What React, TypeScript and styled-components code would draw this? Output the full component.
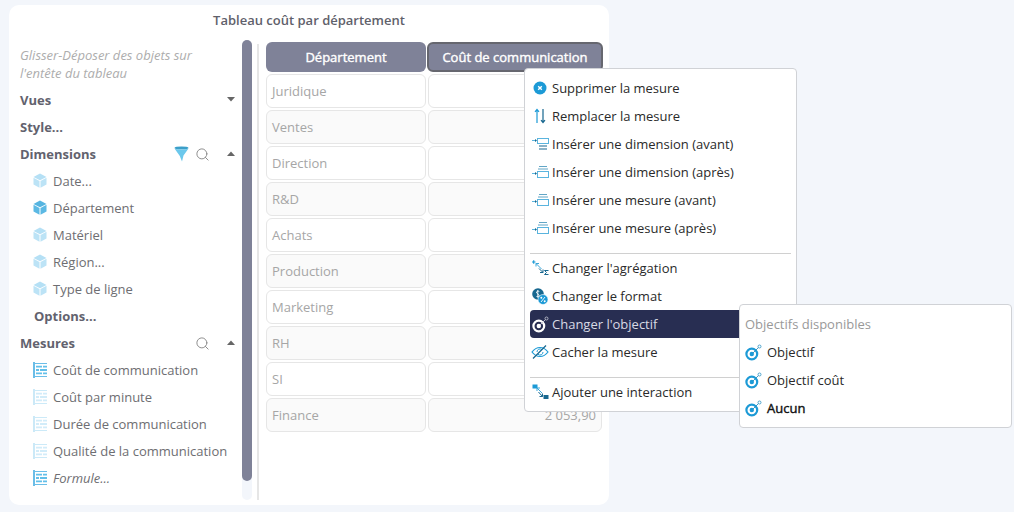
import styled, { createGlobalStyle } from "styled-components";
import { Search } from "lucide-react";

const GlobalStyle = createGlobalStyle`
  html, body {
    margin: 0;
    padding: 0;
    background: #f3f6fb;
    font-family: "Open Sans", "Liberation Sans", sans-serif;
  }
`;

const dimensions = [
  { label: "Date...", active: false },
  { label: "Département", active: true },
  { label: "Matériel", active: false },
  { label: "Région...", active: false },
  { label: "Type de ligne", active: false },
];

const measures = [
  { label: "Coût de communication", active: true },
  { label: "Coût par minute", active: false },
  { label: "Durée de communication", active: false },
  { label: "Qualité de la communication", active: false },
  { label: "Formule...", active: true, italic: true },
];

const rows = [
  "Juridique",
  "Ventes",
  "Direction",
  "R&D",
  "Achats",
  "Production",
  "Marketing",
  "RH",
  "SI",
  "Finance",
];

function CubeIcon({ active }: { active: boolean }) {
  const top = active ? "#55b4e0" : "#b5e0f5";
  const side = active ? "#5cb9e4" : "#bce3f6";
  return (
    <svg width="14" height="15" viewBox="0 0 14 15">
      <path d="M7 0.500 13.500 4 7 7.200 0.500 4Z" fill={top} />
      <path d="M0.500 4.800 6.500 8v6.700L0.500 11.400Z" fill={side} />
      <path d="M13.500 4.800 7.500 8v6.700l6-3.300Z" fill={side} />
    </svg>
  );
}

function MeasureIcon({ active }: { active: boolean }) {
  const line = active ? "#45ade2" : "#bfe4f6";
  const dash = active ? "#62bfe9" : "#d2ecf9";
  return (
    <svg width="15" height="16" viewBox="0 0 15 16" fill="none">
      <path d="M1 0v16" stroke={line} strokeWidth="1.600" />
      <path d="M2 1.500h12M2 14.500h12" stroke={line} strokeWidth="0.800" />
      <path d="M3 4.700h11M3 11.300h11" stroke={dash} strokeWidth="1.800" strokeDasharray="6 1 4" />
      <path d="M3 8h11" stroke={dash} strokeWidth="1.800" strokeDasharray="3 1 7" />
    </svg>
  );
}

function FunnelIcon() {
  return (
    <svg width="15" height="16" viewBox="0 0 15 16">
      <ellipse cx="7.500" cy="2" rx="7" ry="1.600" fill="#3b9fc9" />
      <path d="M0.500 2.600c2 1.400 12 1.400 14 0L9.500 9.500 8 15.500 5.800 10Z" fill="#6cc8ec" />
    </svg>
  );
}

function Caret({ up }: { up?: boolean }) {
  return (
    <svg width="8" height="5" viewBox="0 0 8 5">
      <path d={up ? "M0 5 4 0.500 8 5Z" : "M0 0 8 0 4 4.500Z"} fill="#666" />
    </svg>
  );
}

function CloseIcon() {
  return (
    <svg width="14" height="14" viewBox="0 0 14 14">
      <circle cx="7" cy="7" r="6.500" fill="#1c9ad6" />
      <path d="M5.200 5.200l3.600 3.600M8.800 5.200l-3.600 3.600" stroke="#fff" strokeWidth="1.400" />
    </svg>
  );
}

function SwapIcon() {
  return (
    <svg width="12" height="16" viewBox="0 0 12 16" fill="none" strokeWidth="1.200">
      <path d="M3 15V1.500M1 3.800 3 1.500 5 3.800" stroke="#1c9ad6" />
      <path d="M9 1v13.500M7 12.200 9 14.500 11 12.200" stroke="#17678f" />
    </svg>
  );
}

function InsertIcon({ before }: { before?: boolean }) {
  return (
    <svg width="17" height="12" viewBox="0 0 17 12" fill="none">
      <path d={before ? "M0 2.500h3" : "M0 7.500h3"} stroke="#5ab4de" />
      <path d={before ? "M3 1v3l2-1.500Z" : "M3 6v3l2-1.500Z"} fill="#17678f" />
      {before ? (
        <>
          <rect x="5.500" y="0.500" width="11" height="5" stroke="#5ab4de" />
          <path d="M7 8h8M7 11h8" stroke="#17678f" strokeWidth="1.100" />
        </>
      ) : (
        <>
          <path d="M7 0.500h8M6 3h10" stroke="#3a8fb8" strokeWidth="0.800" />
          <rect x="5.500" y="5.500" width="11" height="6" stroke="#5ab4de" />
        </>
      )}
    </svg>
  );
}

function AggregationIcon() {
  return (
    <svg width="17" height="16" viewBox="0 0 17 16" fill="none">
      <path d="M0 2h3.500M1.700 0.300v3.500" stroke="#1c9ad6" strokeWidth="1.200" />
      <path d="M4 3.500 9.500 9M4 6.500v-3h3" stroke="#3ba7da" />
      <path d="M7 8.500 11 12.500M8 12.500h3v-3" stroke="#17678f" />
      <path d="M16.500 10.500h-4l2 2-2 2h4" stroke="#17678f" />
    </svg>
  );
}

function FormatIcon() {
  return (
    <svg width="16" height="17" viewBox="0 0 16 17">
      <circle cx="6" cy="6" r="5.800" fill="#17678f" />
      <circle cx="11" cy="11.500" r="5" fill="#1c9ad6" stroke="#fff" strokeWidth="0.600" />
      <path d="M4.500 8.500c2 .8 3-.2 2.500-1.500S4 5.500 4.500 4c.5-1 1.600-1 2.800-.5M5.800 2v7.500" stroke="#fff" fill="none" strokeWidth="0.900" />
      <path d="M9 14l4-5" stroke="#fff" strokeWidth="0.900" />
      <circle cx="9.300" cy="9.800" r="1" fill="#fff" />
      <circle cx="12.700" cy="13.300" r="1" fill="#fff" />
    </svg>
  );
}

function TargetIcon({ color, tip }: { color: string; tip: string }) {
  return (
    <svg width="17" height="17" viewBox="0 0 17 17" fill="none">
      <circle cx="6.800" cy="10" r="5.400" stroke={color} strokeWidth="2.200" />
      <circle cx="6.800" cy="10" r="2.200" fill={color} />
      <path d="M8 9 13.300 3.700" stroke={tip} strokeWidth="0.900" />
      <circle cx="14.500" cy="2.500" r="1.500" stroke={tip} strokeWidth="0.800" />
    </svg>
  );
}

function EyeOffIcon() {
  return (
    <svg width="18" height="14" viewBox="0 0 18 14" fill="none" stroke="#1c9ad6">
      <path d="M1 7c4.500-6 11.500-6 16 0-4.500 6-11.500 6-16 0Z" strokeWidth="1.200" />
      <path d="M6 7a3 3 0 0 1 5-2.300M12 7a3 3 0 0 1-5 2.300" strokeWidth="1" />
      <path d="M15 0.500 2 13.500" stroke="#17678f" strokeWidth="1.200" />
    </svg>
  );
}

function InteractionIcon() {
  return (
    <svg width="17" height="16" viewBox="0 0 17 16" fill="none">
      <rect x="0.500" y="0.500" width="5" height="4" fill="#1c9ad6" />
      <rect x="11.500" y="11" width="5" height="4" fill="#17678f" />
      <path d="M5 4 10 9M5 7V4h3" stroke="#3ba7da" />
      <path d="M6.500 8 10.500 12.500M7.500 12.500h3v-3" stroke="#17678f" />
    </svg>
  );
}

export default function App() {
  return (
    <>
      <GlobalStyle />
      <Page>
        <Card>
          <Title>Tableau coût par département</Title>
          <CardBody>
            <Sidebar>
              <Hint>Glisser-Déposer des objets sur l'entête du tableau</Hint>
              <SectionRow>
                <SectionName>Vues</SectionName>
                <SectionTools>
                  <CaretSlot>
                    <Caret />
                  </CaretSlot>
                </SectionTools>
              </SectionRow>
              <SectionRow>
                <SectionName>Style...</SectionName>
              </SectionRow>
              <SectionRow>
                <SectionName>Dimensions</SectionName>
                <SectionTools>
                  <FunnelIcon />
                  <SearchIcon size={15} strokeWidth={1.500} />
                  <CaretSlot>
                    <Caret up />
                  </CaretSlot>
                </SectionTools>
              </SectionRow>
              {dimensions.map((item) => (
                <ItemRow key={item.label}>
                  <IconSlot>
                    <CubeIcon active={item.active} />
                  </IconSlot>
                  {item.label}
                </ItemRow>
              ))}
              <SectionRow $indent>
                <SectionName>Options...</SectionName>
              </SectionRow>
              <SectionRow>
                <SectionName>Mesures</SectionName>
                <SectionTools>
                  <SearchIcon size={15} strokeWidth={1.500} />
                  <CaretSlot>
                    <Caret up />
                  </CaretSlot>
                </SectionTools>
              </SectionRow>
              {measures.map((item) => (
                <ItemRow key={item.label} $italic={item.italic}>
                  <IconSlot>
                    <MeasureIcon active={item.active} />
                  </IconSlot>
                  {item.label}
                </ItemRow>
              ))}
            </Sidebar>
            <ScrollTrack>
              <ScrollThumb />
            </ScrollTrack>
            <Divider />
            <TableArea>
              <TableGrid>
                <HeaderCell>Département</HeaderCell>
                <HeaderCell $selected>Coût de communication</HeaderCell>
                {rows.map((name, index) => (
                  <TableRow key={name} $shaded={index % 2 === 1}>
                    <Cell>{name}</Cell>
                    <Cell $number>{name === "Finance" ? "2 053,90" : ""}</Cell>
                  </TableRow>
                ))}
              </TableGrid>
            </TableArea>
          </CardBody>
        </Card>

        <ContextMenu>
          <MenuItem>
            <MenuIcon>
              <CloseIcon />
            </MenuIcon>
            Supprimer la mesure
          </MenuItem>
          <MenuItem>
            <MenuIcon>
              <SwapIcon />
            </MenuIcon>
            Remplacer la mesure
          </MenuItem>
          <MenuItem>
            <MenuIcon>
              <InsertIcon before />
            </MenuIcon>
            Insérer une dimension (avant)
          </MenuItem>
          <MenuItem>
            <MenuIcon>
              <InsertIcon />
            </MenuIcon>
            Insérer une dimension (après)
          </MenuItem>
          <MenuItem>
            <MenuIcon>
              <InsertIcon />
            </MenuIcon>
            Insérer une mesure (avant)
          </MenuItem>
          <MenuItem>
            <MenuIcon>
              <InsertIcon />
            </MenuIcon>
            Insérer une mesure (après)
          </MenuItem>
          <MenuSeparator />
          <MenuItem>
            <MenuIcon>
              <AggregationIcon />
            </MenuIcon>
            Changer l'agrégation
          </MenuItem>
          <MenuItem>
            <MenuIcon>
              <FormatIcon />
            </MenuIcon>
            Changer le format
          </MenuItem>
          <MenuItem $highlighted>
            <MenuIcon>
              <TargetIcon color="#fff" tip="#c9cbd8" />
            </MenuIcon>
            Changer l'objectif
          </MenuItem>
          <MenuItem>
            <MenuIcon>
              <EyeOffIcon />
            </MenuIcon>
            Cacher la mesure
          </MenuItem>
          <MenuSeparator />
          <MenuItem>
            <MenuIcon>
              <InteractionIcon />
            </MenuIcon>
            Ajouter une interaction
          </MenuItem>
        </ContextMenu>

        <SubMenu>
          <SubMenuTitle>Objectifs disponibles</SubMenuTitle>
          <SubMenuItem>
            <TargetIcon color="#1c9ad6" tip="#2a8fc0" />
            Objectif
          </SubMenuItem>
          <SubMenuItem>
            <TargetIcon color="#1c9ad6" tip="#2a8fc0" />
            Objectif coût
          </SubMenuItem>
          <SubMenuItem $bold>
            <TargetIcon color="#1c9ad6" tip="#2a8fc0" />
            Aucun
          </SubMenuItem>
        </SubMenu>
      </Page>
    </>
  );
}

const Page = styled.div`
  position: relative;
  width: 1014px;
  height: 512px;
  padding: 5px 0 0 9px;
  box-sizing: border-box;
  overflow: hidden;
`;

const Card = styled.div`
  display: flex;
  flex-direction: column;
  width: 600px;
  height: 500px;
  background: #fff;
  border-radius: 10px;
  padding-bottom: 5px;
  box-sizing: border-box;
`;

const Title = styled.div`
  height: 35px;
  line-height: 31px;
  text-align: center;
  font-size: 13px;
  font-weight: 600;
  color: #5f616b;
`;

const CardBody = styled.div`
  display: flex;
  flex: 1;
  min-height: 0;
`;

const Sidebar = styled.div`
  width: 233px;
  padding: 6px 0 0 11px;
  box-sizing: border-box;
`;

const Hint = styled.div`
  max-width: 205px;
  font-size: 13px;
  line-height: 18px;
  font-style: italic;
  color: #adadad;
  margin-bottom: 4px;
`;

const SectionRow = styled.div<{ $indent?: boolean }>`
  display: flex;
  align-items: center;
  justify-content: space-between;
  height: 27px;
  padding-left: ${(props) => (props.$indent ? "14px" : "0")};
`;

const SectionName = styled.span`
  font-size: 13px;
  font-weight: 700;
  color: #62626e;
`;

const SectionTools = styled.div`
  display: flex;
  align-items: center;
  gap: 6px;
`;

const SearchIcon = styled(Search)`
  color: #888;
  transform: translateY(1px);
`;

const CaretSlot = styled.span`
  display: flex;
  width: 8px;
  margin: 0 7px 0 11px;
`;

const ItemRow = styled.div<{ $italic?: boolean }>`
  display: flex;
  align-items: center;
  height: 27px;
  padding-left: 13px;
  font-size: 13px;
  color: #6e6e72;
  font-style: ${(props) => (props.$italic ? "italic" : "normal")};
`;

const IconSlot = styled.span`
  display: flex;
  width: 20px;
  justify-content: flex-start;
`;

const ScrollTrack = styled.div`
  display: flex;
  flex-direction: column;
  width: 10px;
  background: #f3f6fb;
  border-radius: 5px;
`;

const ScrollThumb = styled.div`
  height: 441px;
  background: #7f8298;
  border-radius: 5px;
`;

const Divider = styled.div`
  width: 2px;
  margin: 4px 7px 0 5px;
  background: #e6e6e6;
`;

const TableArea = styled.div`
  padding-top: 2px;
`;

const TableGrid = styled.div`
  display: grid;
  grid-template-columns: 160px 176px;
  column-gap: 1px;
  row-gap: 2px;
  align-content: start;
`;

const HeaderCell = styled.div<{ $selected?: boolean }>`
  display: flex;
  align-items: center;
  justify-content: center;
  height: 30px;
  box-sizing: border-box;
  background: #7f8298;
  border: ${(props) => (props.$selected ? "2px solid #66676f" : "none")};
  border-radius: 6px;
  color: #fff;
  font-size: 13px;
  -webkit-text-stroke: 0.4px #fff;
`;

const TableRow = styled.div<{ $shaded: boolean }>`
  display: contents;

  & > div {
    background: ${(props) => (props.$shaded ? "#fafafa" : "#fff")};
  }
`;

const Cell = styled.div<{ $number?: boolean }>`
  display: flex;
  align-items: center;
  justify-content: ${(props) => (props.$number ? "flex-end" : "flex-start")};
  height: 34px;
  box-sizing: border-box;
  padding: 0 5px;
  margin: ${(props) => (props.$number ? "0 1px" : "0")};
  border: 1px solid #e6e6e6;
  border-radius: 6px;
  font-size: 13px;
  color: #a6a6a6;
`;

const ContextMenu = styled.div`
  position: absolute;
  left: 524px;
  top: 68px;
  width: 273px;
  height: 344px;
  box-sizing: border-box;
  padding: 5px;
  background: #fff;
  border: 1px solid #d0d2d6;
  border-radius: 4px;
`;

const MenuItem = styled.div<{ $highlighted?: boolean }>`
  display: flex;
  align-items: center;
  height: 28px;
  padding-left: 1px;
  font-size: 13px;
  border-radius: 4px;
  background: ${(props) => (props.$highlighted ? "#282e52" : "transparent")};
  color: ${(props) => (props.$highlighted ? "#d8dae4" : "#2a2a2a")};
`;

const MenuIcon = styled.span`
  display: flex;
  width: 18px;
  margin-right: 3px;
  justify-content: center;
`;

const MenuSeparator = styled.div`
  height: 1px;
  margin-top: 11px;
  background: #d0d0d0;
`;

const SubMenu = styled.div`
  position: absolute;
  left: 739px;
  top: 304px;
  width: 273px;
  height: 124px;
  box-sizing: border-box;
  padding: 5px;
  background: #fff;
  border: 1px solid #d0d2d6;
  border-radius: 4px;
`;

const SubMenuTitle = styled.div`
  height: 28px;
  line-height: 28px;
  font-size: 13px;
  color: #999;
`;

const SubMenuItem = styled.div<{ $bold?: boolean }>`
  display: flex;
  align-items: center;
  gap: 5px;
  height: 28px;
  font-size: 13px;
  color: ${(props) => (props.$bold ? "#111" : "#2a2a2a")};
  -webkit-text-stroke: ${(props) => (props.$bold ? "0.4px #111" : "0")};
`;
